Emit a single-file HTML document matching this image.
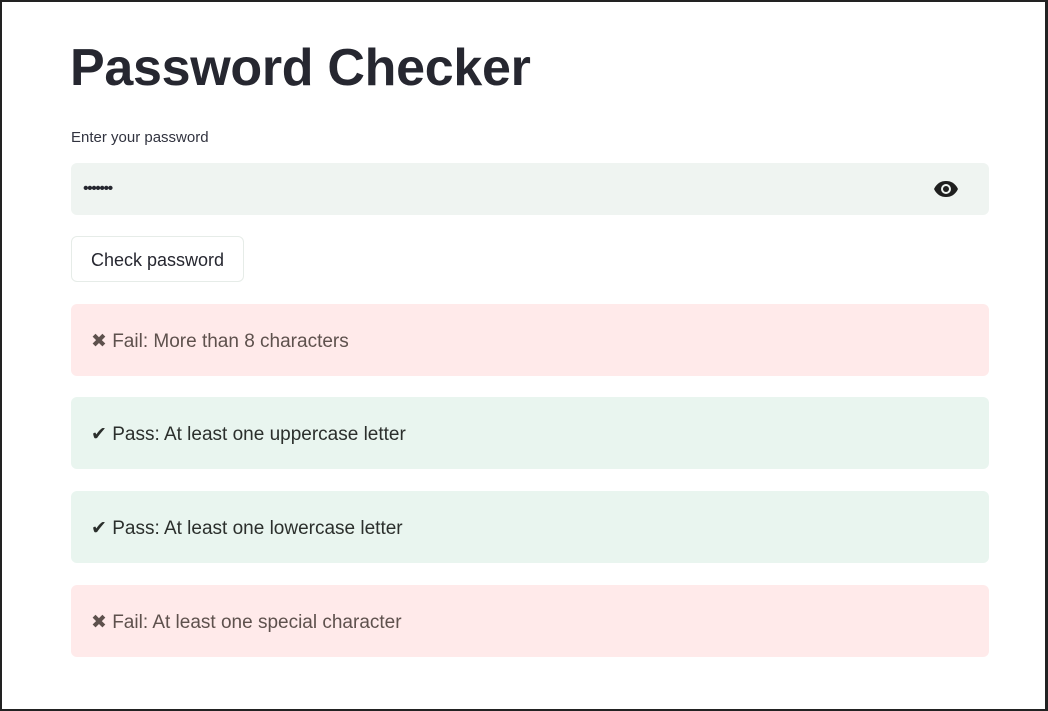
<!DOCTYPE html>
<html><head><style>
html,body{margin:0;padding:0;}
body{width:1048px;height:711px;background:#fff;font-family:"Liberation Sans",sans-serif;position:relative;overflow:hidden;box-sizing:border-box;border:2px solid #222;border-right-width:3px;}
h1{position:absolute;left:68px;top:36px;margin:0;font-size:52px;font-weight:bold;color:#262730;letter-spacing:-0.3px;}
.lbl{position:absolute;left:69px;top:127px;font-size:15px;color:#31333f;}
.inp{position:absolute;left:69px;top:161px;width:918px;height:52px;background:#eff4f1;border-radius:6px;}
.dots{position:absolute;left:12px;top:0;line-height:52px;font-size:16px;color:#262730;letter-spacing:-1.5px;}
.eye{position:absolute right:30px;top:17px;}
.eye{position:absolute;right:30px;top:17px;}
.btn{position:absolute;left:69px;top:234px;width:173px;height:46px;border:1px solid #e6ece8;border-radius:6px;box-sizing:border-box;font-size:18px;color:#262730;text-align:center;line-height:46px;}
.box{position:absolute;left:69px;width:918px;height:72px;border-radius:6px;font-size:19px;line-height:76px;box-sizing:border-box;padding-left:20px;overflow:hidden;}
.f{background:#ffeaea;color:#5e514d;}
.p{background:#e9f5ef;color:#2b2f2c;}
</style></head><body>
<h1>Password Checker</h1>
<div class="lbl">Enter your password</div>
<div class="inp"><span class="dots">•••••••</span>
<svg class="eye" width="26" height="18" viewBox="0 0 26 18"><path d="M1 9C4 3 8 1 13 1s9 2 12 8c-3 6-7 8-12 8S4 15 1 9z" fill="#1f1f1f"/><circle cx="13" cy="9" r="5" fill="#eff4f1"/><circle cx="13" cy="9" r="3" fill="#1f1f1f"/></svg></div>
<div class="btn">Check password</div>
<div class="box f" style="top:302px">✖ Fail: More than 8 characters</div>
<div class="box p" style="top:395px">✔ Pass: At least one uppercase letter</div>
<div class="box p" style="top:489px">✔ Pass: At least one lowercase letter</div>
<div class="box f" style="top:583px">✖ Fail: At least one special character</div>
</body></html>
